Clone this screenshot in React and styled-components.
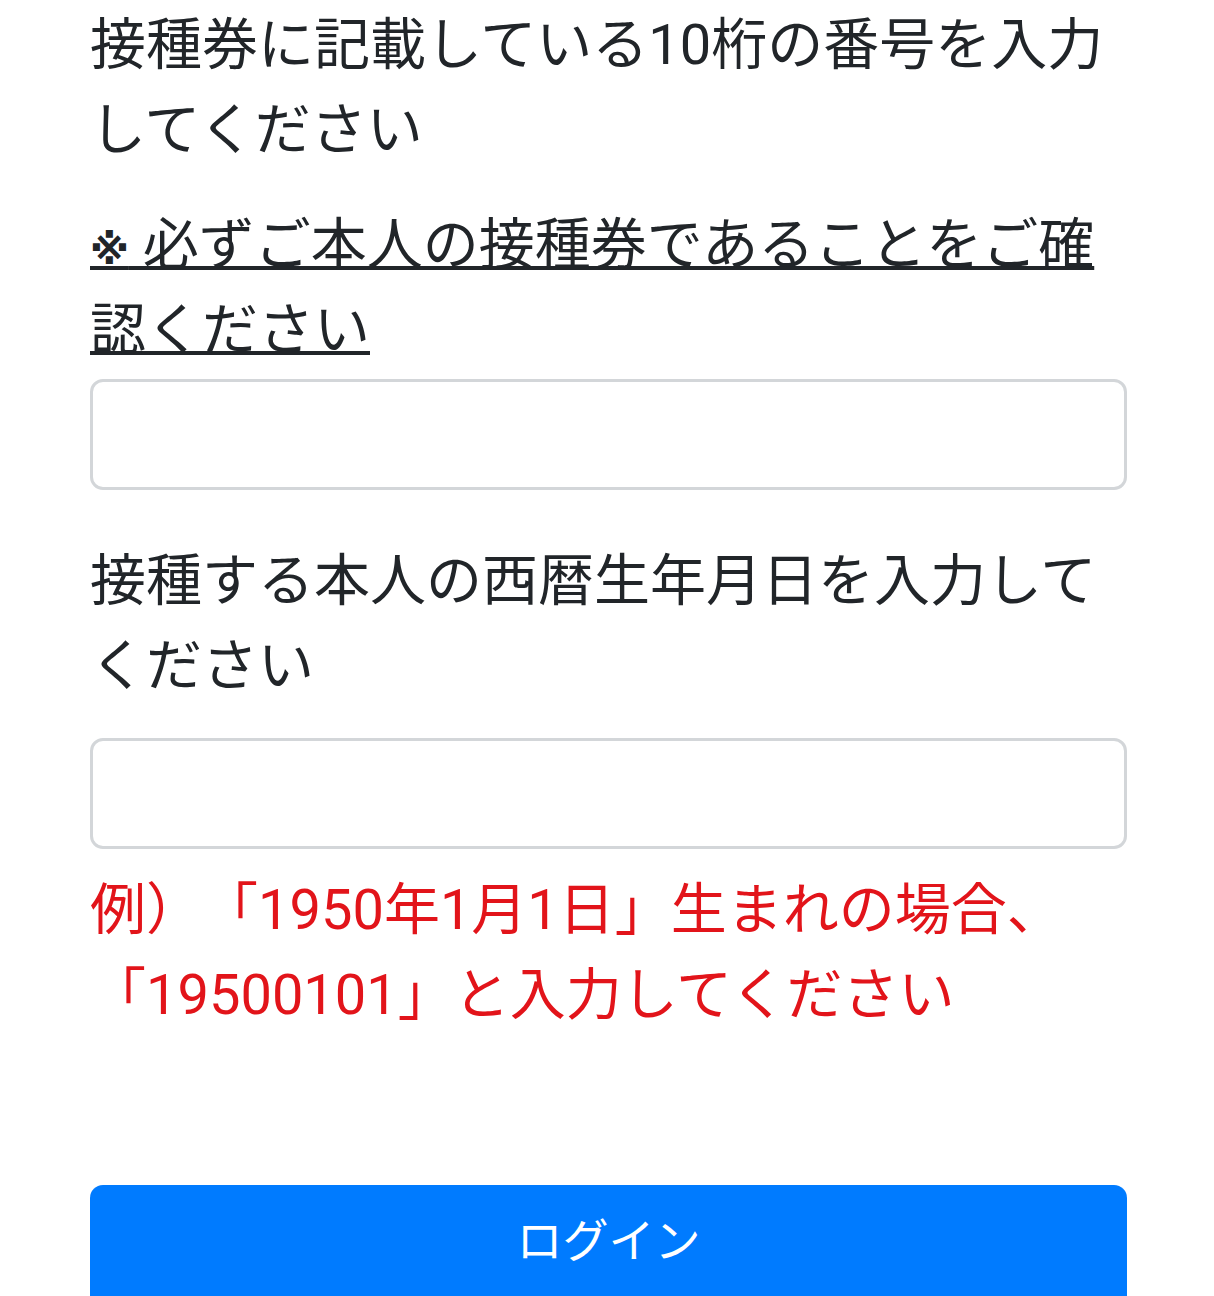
import styled, { createGlobalStyle } from "styled-components";

const GlobalStyle = createGlobalStyle`
  body {
    margin: 0;
    background: #fff;
    font-family: Roboto, "Noto Sans CJK JP", sans-serif;
    color: #212529;
    text-spacing-trim: space-all;
  }
`;

const Page = styled.div`
  padding: 3px 87px 0 90px;
  height: 1296px;
  overflow: hidden;
  box-sizing: border-box;
`;

const Form = styled.form`
  display: flex;
  flex-direction: column;
`;

const Label = styled.p`
  margin: 0 0 ${(props) => props.gap || 0}px;
  font-size: 56px;
  line-height: 85px;
  font-weight: 400;
`;

const Notice = styled.span`
  text-decoration: underline;
  text-decoration-thickness: 4px;
  text-underline-offset: 2px;
`;

const Mark = styled.span`
  font-family: "DejaVu Sans", sans-serif;
  font-size: 40px;
  font-weight: 700;
  line-height: 0;
`;

const Input = styled.input`
  display: block;
  width: 100%;
  height: 111px;
  box-sizing: border-box;
  border: 3px solid #d3d6d9;
  border-radius: 13px;
  background: #fff;
  font-size: 56px;
  padding: 0 30px;
  margin: 0 0 ${(props) => props.gap || 0}px;
  outline: none;
`;

const Example = styled.p`
  margin: 0;
  font-size: 56px;
  line-height: 85px;
  color: #e2141a;
`;

const LoginButton = styled.button`
  margin-top: 147px;
  width: 100%;
  height: 130px;
  border: none;
  border-radius: 13px;
  background: #007bff;
  color: #fff;
  font-family: Roboto, "Noto Sans CJK JP", sans-serif;
  font-size: 46px;
  padding: 0 0 26px;
`;

export default function App() {
  return (
    <>
      <GlobalStyle />
      <Page>
        <Form onSubmit={(e) => e.preventDefault()}>
          <Label gap={30}>接種券に記載している10桁の番号を入力してください</Label>
          <Label gap={6}>
            <Notice>
              <Mark>※</Mark> 必ずご本人の接種券であることをご確認ください
            </Notice>
          </Label>
          <Input type="text" gap={49} />
          <Label gap={29}>接種する本人の西暦生年月日を入力してください</Label>
          <Input type="text" gap={19} />
          <Example>例）「1950年1月1日」生まれの場合、「19500101」と入力してください</Example>
          <LoginButton type="submit">ログイン</LoginButton>
        </Form>
      </Page>
    </>
  );
}
